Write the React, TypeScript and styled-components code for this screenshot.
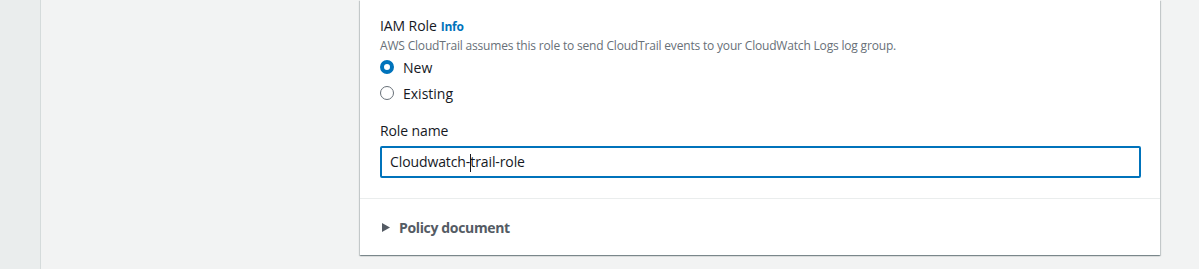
import React from 'react';
import styled, { createGlobalStyle } from 'styled-components';

const GlobalStyle = createGlobalStyle`
  html, body {
    margin: 0;
    padding: 0;
    background: #f2f3f3;
  }
  body {
    font-family: "Open Sans", "Noto Sans", sans-serif;
    color: #16191f;
  }
`;

const Page = styled.div`
  display: flex;
  width: 1199px;
  height: 269px;
  overflow: hidden;
  background: #f2f3f3;
`;

const SideStrip = styled.div`
  width: 40px;
  flex: none;
  background: #eaeded;
  border-right: 1px solid #d5dbdb;
`;

const Main = styled.main`
  flex: 1;
  padding-left: 319px;
`;

const Card = styled.section`
  width: 800px;
  background: #fff;
  box-shadow: 0 1px 1px 0 rgba(0, 28, 36, 0.3), 1px 1px 1px 0 rgba(0, 28, 36, 0.15),
    -1px 1px 1px 0 rgba(0, 28, 36, 0.15);
`;

const Body = styled.div`
  padding: 15px 19px 20px 20px;
  border-bottom: 1px solid #eaeded;
`;

const Label = styled.div`
  font-size: 14px;
  line-height: 22px;
  color: #16191f;
  letter-spacing: -0.1px;
`;

const InfoLink = styled.a`
  font-size: 12px;
  font-weight: 700;
  color: #0073bb;
  margin-left: 4px;
  letter-spacing: -0.2px;
  text-decoration: none;
`;

const Description = styled.div`
  font-size: 12px;
  line-height: 16px;
  color: #687078;
  letter-spacing: -0.18px;
`;

const RadioGroup = styled.div`
  display: flex;
  flex-direction: column;
`;

const RadioRow = styled.label`
  display: flex;
  align-items: center;
  height: 26px;
  font-size: 14px;
  color: #16191f;
`;

const RadioDot = styled.span<{ checked?: boolean }>`
  box-sizing: border-box;
  width: 14px;
  height: 14px;
  border-radius: 50%;
  margin-right: 9px;
  background: #fff;
  border: ${({ checked }) => (checked ? '4px solid #0073bb' : '1px solid #687078')};
`;

const Field = styled.div`
  margin-top: 14px;
`;

const Input = styled.div`
  box-sizing: border-box;
  margin-top: 4px;
  height: 32px;
  display: flex;
  align-items: center;
  padding: 0 8px;
  border: 2px solid #0073bb;
  border-radius: 2px;
  font-size: 14px;
  color: #16191f;
  letter-spacing: -0.1px;
`;

const Caret = styled.span`
  display: inline-block;
  width: 1px;
  height: 18px;
  margin-right: -1px;
  background: #16191f;
  vertical-align: middle;
`;

const Footer = styled.div`
  display: flex;
  align-items: center;
  height: 56px;
  padding-left: 22px;
  font-size: 14px;
  font-weight: 700;
  color: #545b64;
  letter-spacing: -0.35px;
`;

const Arrow = styled.svg`
  width: 8px;
  height: 9px;
  margin-right: 9px;
`;

const App = () => (
  <>
    <GlobalStyle />
    <Page>
      <SideStrip />
      <Main>
        <Card>
          <Body>
            <Label>
              IAM Role<InfoLink>Info</InfoLink>
            </Label>
            <Description>
              AWS CloudTrail assumes this role to send CloudTrail events to your CloudWatch Logs log group.
            </Description>
            <RadioGroup>
              <RadioRow>
                <RadioDot checked />
                New
              </RadioRow>
              <RadioRow>
                <RadioDot />
                Existing
              </RadioRow>
            </RadioGroup>
            <Field>
              <Label>Role name</Label>
              <Input>
                <span>
                  Cloudwatch-<Caret />trail-role
                </span>
              </Input>
            </Field>
          </Body>
          <Footer>
            <Arrow viewBox="0 0 8 9">
              <path d="M0 0 L8 4.5 L0 9 Z" fill="#545b64" />
            </Arrow>
            Policy document
          </Footer>
        </Card>
      </Main>
    </Page>
  </>
);

export default App;
